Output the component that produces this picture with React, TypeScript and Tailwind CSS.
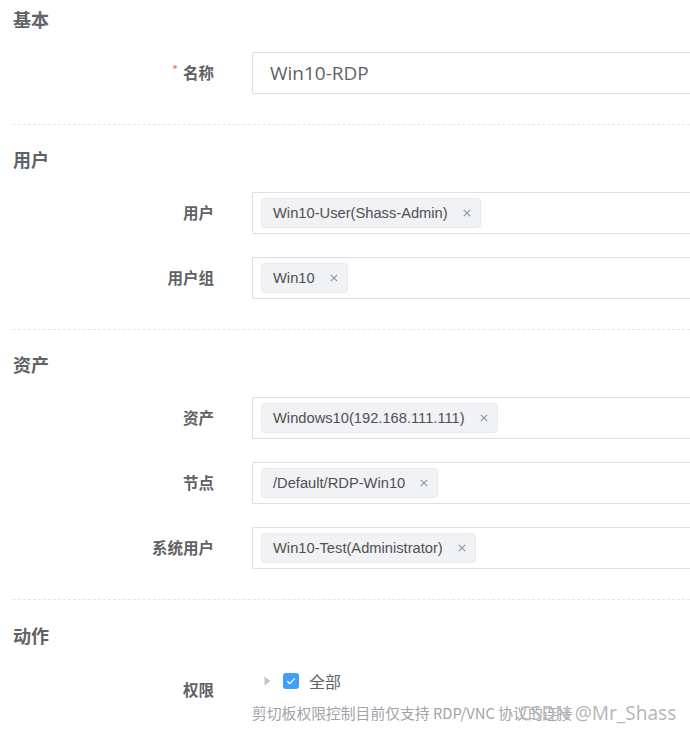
import React from "react";

const cjk = '"Noto Sans CJK SC", "Noto Sans", sans-serif';
const latin = '"Liberation Sans", Arial, "Noto Sans CJK SC", sans-serif';

function Close() {
  return (
    <svg width="8" height="8" viewBox="0 0 8 8" className="ml-[15px] shrink-0">
      <path d="M0.8 0.8 L7.2 7.2 M7.2 0.8 L0.8 7.2" stroke="#909399" strokeWidth="1.1" />
    </svg>
  );
}

function Tag({ text }: { text: string }) {
  return (
    <div
      className="flex items-center h-[30px] pl-[11px] pr-[9px] bg-[#f0f2f5] border border-[#e9e9eb] rounded-[4px] text-[14.7px] text-[#505050]"
      style={{ fontFamily: latin }}
    >
      <span>{text}</span>
      <Close />
    </div>
  );
}

function Row({ label, required, children, last }: { label: string; required?: boolean; children: React.ReactNode; last?: boolean }) {
  return (
    <div className={`flex items-center h-[42px] ${last ? "" : "mb-[23px]"}`}>
      <div className="w-[201px] text-right text-[15.5px] font-bold text-[#606266] flex justify-end items-center" style={{ fontFamily: cjk }}>
        {required && <span className="text-[#f56c6c] text-[13px] mr-[5px] -mt-[6px] font-normal">*</span>}
        <span>{label}</span>
      </div>
      <div className="ml-[38px] flex-1 h-[42px] border border-[#dcdfe6] border-r-0 rounded-l-[2px] flex items-center pl-[8px]">
        {children}
      </div>
    </div>
  );
}

function Heading({ text, first }: { text: string; first?: boolean }) {
  return (
    <div
      className={`text-[18px] font-bold leading-[24px] text-[#606266] ${first ? "pt-[7px]" : "pt-[22px]"} mb-[21px]`}
      style={{ fontFamily: cjk }}
    >
      {text}
    </div>
  );
}

function Divider() {
  return <div className="mt-[30px] border-t border-dashed border-[#e4e7ed]" />;
}

export default function App() {
  return (
    <div className="relative w-[690px] h-[733px] overflow-hidden bg-white pl-[13px]">
      <Heading text="基本" first />
      <Row label="名称" required last>
        <span className="ml-[9px] text-[19px] text-[#606266]" style={{ fontFamily: '"Open Sans", sans-serif' }}>
          Win10-RDP
        </span>
      </Row>
      <Divider />

      <Heading text="用户" />
      <Row label="用户">
        <Tag text="Win10-User(Shass-Admin)" />
      </Row>
      <Row label="用户组" last>
        <Tag text="Win10" />
      </Row>
      <Divider />

      <Heading text="资产" />
      <Row label="资产">
        <Tag text="Windows10(192.168.111.111)" />
      </Row>
      <Row label="节点">
        <Tag text="/Default/RDP-Win10" />
      </Row>
      <Row label="系统用户" last>
        <Tag text="Win10-Test(Administrator)" />
      </Row>
      <Divider />

      <div className="text-[18px] font-bold leading-[24px] text-[#606266] pt-[23px] mb-[21px]" style={{ fontFamily: cjk }}>
        动作
      </div>
      <div className="flex">
        <div className="w-[201px] h-[40px] mt-[2px] flex items-center justify-end text-[15.5px] font-bold text-[#606266]" style={{ fontFamily: cjk }}>
          权限
        </div>
        <div className="ml-[38px] flex flex-col">
          <div className="h-[26px] flex items-center pl-[12px]">
            <svg width="7" height="10" viewBox="0 0 7 10" className="shrink-0">
              <path d="M0.5 0.5 L6.5 5 L0.5 9.5 Z" fill="#c0c4cc" />
            </svg>
            <div className="ml-[12px] w-[16px] h-[16px] rounded-[3px] bg-[#409eff] flex items-center justify-center">
              <svg width="10" height="8" viewBox="0 0 10 8">
                <path d="M1.2 4.2 L3.8 6.6 L8.8 1.4" stroke="white" strokeWidth="1.3" fill="none" />
              </svg>
            </div>
            <span className="ml-[10px] text-[16px] text-[#606266]" style={{ fontFamily: cjk }}>
              全部
            </span>
          </div>
          <div className="mt-[9px] text-[14.8px] leading-[20px] text-[#a0a3a8] whitespace-nowrap" style={{ fontFamily: cjk }}>
            剪切板权限控制目前仅支持 RDP/VNC 协议的连接
          </div>
        </div>
      </div>

      <div
        className="absolute left-[519px] top-[700px] text-[19px] leading-[26px] text-[rgba(170,170,175,0.85)] whitespace-nowrap"
        style={{ fontFamily: '"Noto Sans", sans-serif', textShadow: "0 0 1px rgba(255,255,255,0.8)" }}
      >
        CSDN @Mr_Shass
      </div>
    </div>
  );
}
